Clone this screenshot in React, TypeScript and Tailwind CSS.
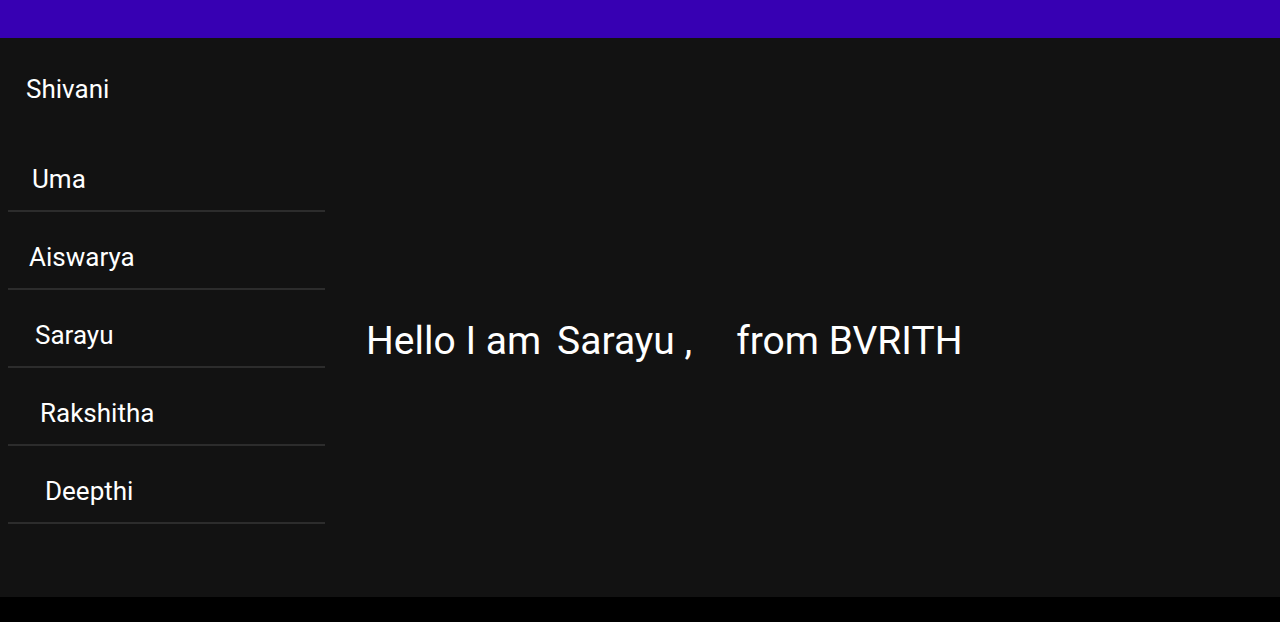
const friends = [
  { name: "Uma", pad: "pl-[24px]" },
  { name: "Aiswarya", pad: "pl-[21px]" },
  { name: "Sarayu", pad: "pl-[27px]" },
  { name: "Rakshitha", pad: "pl-[32px]" },
  { name: "Deepthi", pad: "pl-[37px]" },
];

export default function App() {
  return (
    <div className="w-screen h-screen flex flex-col bg-black font-['Roboto',sans-serif] text-white">
      <header className="h-[38px] bg-[#3700b3] shrink-0" />

      <main className="h-[559px] bg-[#121212] flex">
        <aside className="w-[333px] px-2">
          <div className="h-[96px] pt-[36px] pl-[18px] text-[26px] leading-[30px]">Shivani</div>
          {friends.map((f) => (
            <div
              key={f.name}
              className={`h-[78px] pt-[30px] border-b-2 border-[#2c2c2c] text-[26px] leading-[30px] ${f.pad}`}
            >
              {f.name}
            </div>
          ))}
        </aside>

        <section className="flex-1 flex items-center pl-[33px] pt-[46px]">
          <p className="text-[39px] leading-[44px] flex">
            <span>Hello I am</span>
            <span className="ml-[16px]">Sarayu ,</span>
            <span className="ml-[44px]">from BVRITH</span>
          </p>
        </section>
      </main>
    </div>
  );
}
